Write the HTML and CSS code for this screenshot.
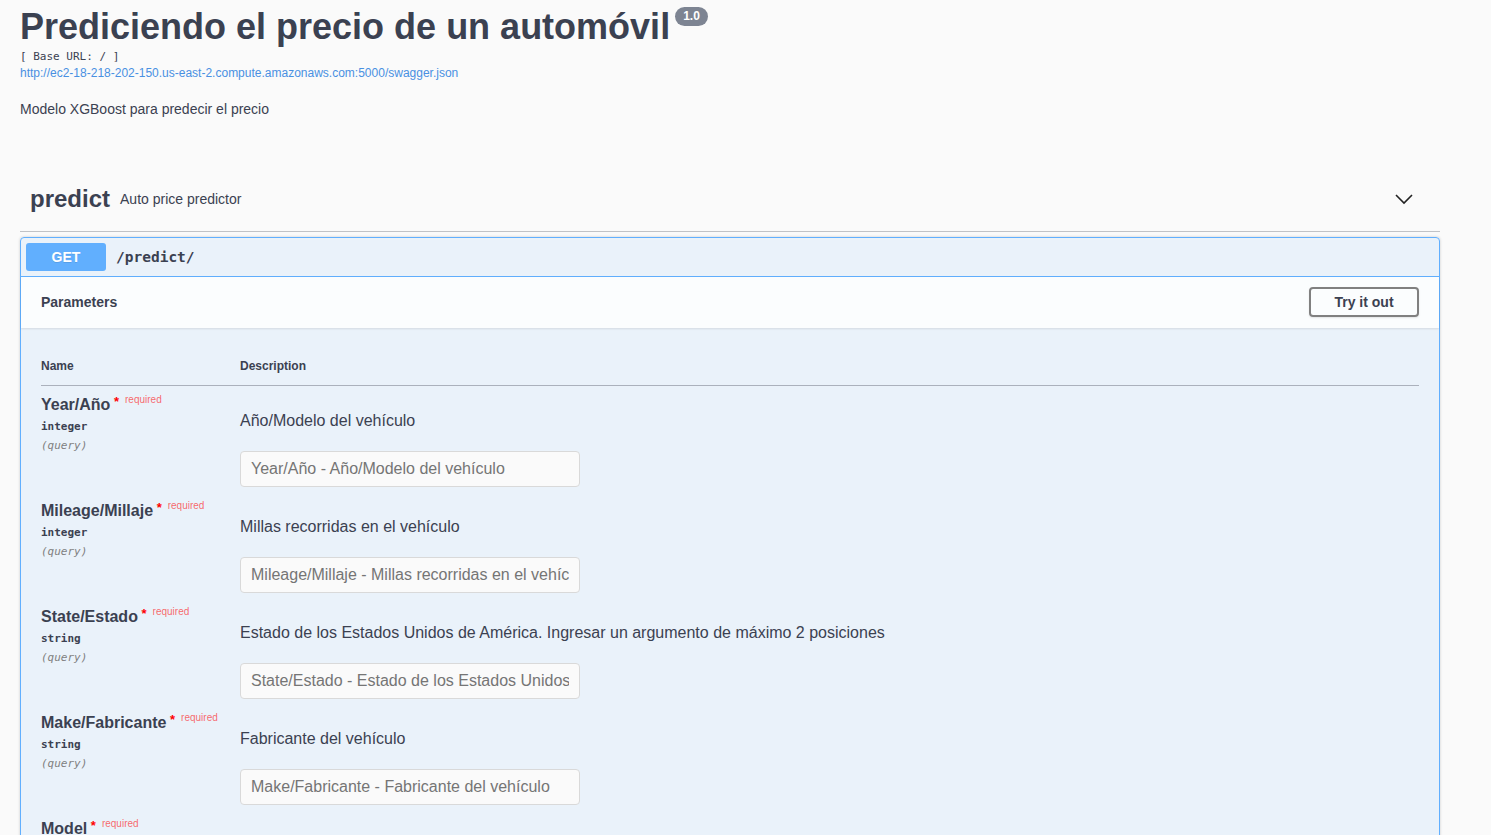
FILE: index.html
```html
<!DOCTYPE html>
<html lang="es">
<head>
<meta charset="utf-8">
<title>Prediciendo el precio de un automóvil</title>
<link rel="stylesheet" href="styles.css">
</head>
<body>
<div class="wrapper">
  <div class="info">
    <h2 class="title">Prediciendo el precio de un automóvil<span class="version">1.0</span></h2>
    <div class="base-url">[ Base URL: / ]</div>
    <a class="spec-link" href="#">http://ec2-18-218-202-150.us-east-2.compute.amazonaws.com:5000/swagger.json</a>
    <p class="desc">Modelo XGBoost para predecir el precio</p>
  </div>

  <div class="tag">
    <h3 class="tag-title"><span class="tag-name">predict</span><span class="tag-desc">Auto price predictor</span></h3>
    <svg class="chevron" width="20" height="20" viewBox="0 0 20 20"><path d="M2 6 L10 14 L18 6" fill="none" stroke="#222" stroke-width="1.6"/></svg>
  </div>

  <div class="opblock">
    <div class="summary">
      <span class="method">GET</span>
      <span class="path">/predict/</span>
    </div>
    <div class="params-header">
      <h4>Parameters</h4>
      <button class="try-btn">Try it out</button>
    </div>
    <div class="table-container">
      <table class="params">
        <thead>
          <tr><th class="col-name">Name</th><th>Description</th></tr>
        </thead>
        <tbody>
          <tr>
            <td class="col-name">
              <div class="pname">Year/Año<span class="star">&nbsp;*</span><span class="req">required</span></div>
              <div class="ptype">integer</div>
              <div class="pin">(query)</div>
            </td>
            <td class="col-desc">
              <p>Año/Modelo del vehículo</p>
              <input type="text" placeholder="Year/Año - Año/Modelo del vehículo">
            </td>
          </tr>
          <tr>
            <td class="col-name">
              <div class="pname">Mileage/Millaje<span class="star">&nbsp;*</span><span class="req">required</span></div>
              <div class="ptype">integer</div>
              <div class="pin">(query)</div>
            </td>
            <td class="col-desc">
              <p>Millas recorridas en el vehículo</p>
              <input type="text" placeholder="Mileage/Millaje - Millas recorridas en el vehículo">
            </td>
          </tr>
          <tr>
            <td class="col-name">
              <div class="pname">State/Estado<span class="star">&nbsp;*</span><span class="req">required</span></div>
              <div class="ptype">string</div>
              <div class="pin">(query)</div>
            </td>
            <td class="col-desc">
              <p>Estado de los Estados Unidos de América. Ingresar un argumento de máximo 2 posiciones</p>
              <input type="text" placeholder="State/Estado - Estado de los Estados Unidos de América. Ingresar un argumento de máximo 2 posiciones">
            </td>
          </tr>
          <tr>
            <td class="col-name">
              <div class="pname">Make/Fabricante<span class="star">&nbsp;*</span><span class="req">required</span></div>
              <div class="ptype">string</div>
              <div class="pin">(query)</div>
            </td>
            <td class="col-desc">
              <p>Fabricante del vehículo</p>
              <input type="text" placeholder="Make/Fabricante - Fabricante del vehículo">
            </td>
          </tr>
          <tr>
            <td class="col-name">
              <div class="pname">Model<span class="star">&nbsp;*</span><span class="req">required</span></div>
              <div class="ptype">string</div>
              <div class="pin">(query)</div>
            </td>
            <td class="col-desc">
              <p>Modelo del vehículo</p>
              <input type="text" placeholder="Model - Modelo del vehículo">
            </td>
          </tr>
        </tbody>
      </table>
    </div>
  </div>
</div>
</body>
</html>
```

FILE: styles.css
```css
html, body {
  margin: 0;
  padding: 0;
  background: #fafafa;
  color: #3b4151;
  font-family: "Liberation Sans", Arial, sans-serif;
}

.wrapper {
  padding: 0 51px 0 20px;
}

.info {
  padding-top: 6px;
}

.title {
  margin: 0;
  font-size: 36px;
  line-height: 41px;
  font-weight: 700;
  color: #3b4151;
}

.version {
  display: inline-block;
  vertical-align: top;
  margin: 1px 0 0 5px;
  padding: 2px 8px;
  border-radius: 57px;
  background: #7d8492;
  color: #fff;
  font-size: 12px;
  line-height: 15px;
  font-weight: 700;
}

.base-url {
  margin-top: 2px;
  font-family: "DejaVu Sans Mono", monospace;
  font-size: 11px;
  line-height: 16px;
  color: #3b4151;
}

.spec-link {
  display: block;
  margin-top: -1px;
  font-size: 12px;
  line-height: 18px;
  color: #4990e2;
  text-decoration: none;
}

.desc {
  margin: 17px 0 0;
  font-size: 14px;
  line-height: 20px;
  color: #3b4151;
}

.tag {
  margin-top: 58px;
  display: flex;
  align-items: center;
  justify-content: space-between;
  padding: 5px 26px 15px 10px;
  border-bottom: 1px solid rgba(59, 65, 81, 0.3);
  height: 34px;
}

.tag-title {
  margin: 0;
  display: flex;
  align-items: center;
}

.tag-name {
  font-size: 24px;
  font-weight: 700;
  color: #3b4151;
}

.tag-desc {
  margin-left: 10px;
  font-size: 14px;
  font-weight: 400;
  color: #3b4151;
}

.chevron {
  display: block;
}

.opblock {
  margin-top: 5px;
  border: 1px solid #61affe;
  border-radius: 4px;
  background: rgba(97, 175, 254, 0.1);
  box-shadow: 0 0 3px rgba(0, 0, 0, 0.19);
}

.summary {
  display: flex;
  align-items: center;
  padding: 5px;
  border-bottom: 1px solid #61affe;
}

.method {
  display: inline-block;
  min-width: 80px;
  padding: 6px 0;
  text-align: center;
  background: #61affe;
  color: #fff;
  font-size: 14px;
  line-height: 16px;
  font-weight: 700;
  border-radius: 3px;
  text-shadow: 0 1px 0 rgba(0, 0, 0, 0.1);
}

.path {
  padding: 0 10px;
  font-family: "DejaVu Sans Mono", monospace;
  font-weight: 700;
  font-size: 14.5px;
  color: #3b4151;
}

.params-header {
  display: flex;
  align-items: center;
  justify-content: space-between;
  padding: 8px 20px 10px 20px;
  min-height: 33px;
  background: rgba(255, 255, 255, 0.8);
  box-shadow: 0 1px 2px rgba(0, 0, 0, 0.1);
}

.params-header h4 {
  margin: 0;
  font-size: 14px;
  font-weight: 700;
  color: #3b4151;
}

.try-btn {
  width: 110px;
  height: 30px;
  padding: 0;
  background: transparent;
  border: 2px solid #808080;
  border-radius: 4px;
  font-family: "Liberation Sans", Arial, sans-serif;
  font-size: 14px;
  font-weight: 700;
  color: #3b4151;
  box-shadow: 0 1px 2px rgba(0, 0, 0, 0.1);
}

.table-container {
  padding: 19px 20px 0;
}

.params {
  width: 100%;
  border-collapse: collapse;
}

.params th {
  text-align: left;
  padding: 12px 0 12px;
  font-size: 12px;
  line-height: 14px;
  font-weight: 700;
  color: #3b4151;
  border-bottom: 1px solid rgba(59, 65, 81, 0.2);
}

.col-name {
  width: 199px;
}

.params td {
  vertical-align: top;
  padding: 10px 0 0;
}

.pname {
  font-size: 16px;
  line-height: 18px;
  font-weight: 700;
  color: #3b4151;
}

.star {
  color: red;
  font-size: 13px;
  position: relative;
  top: -4px;
}

.req {
  color: rgba(255, 0, 0, 0.6);
  font-size: 10px;
  font-weight: 400;
  margin-left: 6px;
  position: relative;
  top: -7px;
}

.ptype {
  margin-top: 4px;
  font-family: "DejaVu Sans Mono", monospace;
  font-size: 11px;
  line-height: 14px;
  font-weight: 600;
  color: #3b4151;
}

.pin {
  margin-top: 5px;
  font-family: "DejaVu Sans Mono", monospace;
  font-size: 11px;
  line-height: 14px;
  font-style: italic;
  color: gray;
}

.col-desc p {
  margin: 13px 0 18px;
  font-size: 16px;
  line-height: 24px;
  color: #3b4151;
}

.col-desc input {
  display: block;
  box-sizing: border-box;
  width: 340px;
  height: 36px;
  margin: 0 0 5px;
  padding: 8px 10px;
  border: 1px solid #d9d9d9;
  border-radius: 4px;
  background: #fafafa;
  font-family: "Liberation Sans", Arial, sans-serif;
  font-size: 16px;
  color: #3b4151;
}

.col-desc input::placeholder {
  color: #757575;
}
```
